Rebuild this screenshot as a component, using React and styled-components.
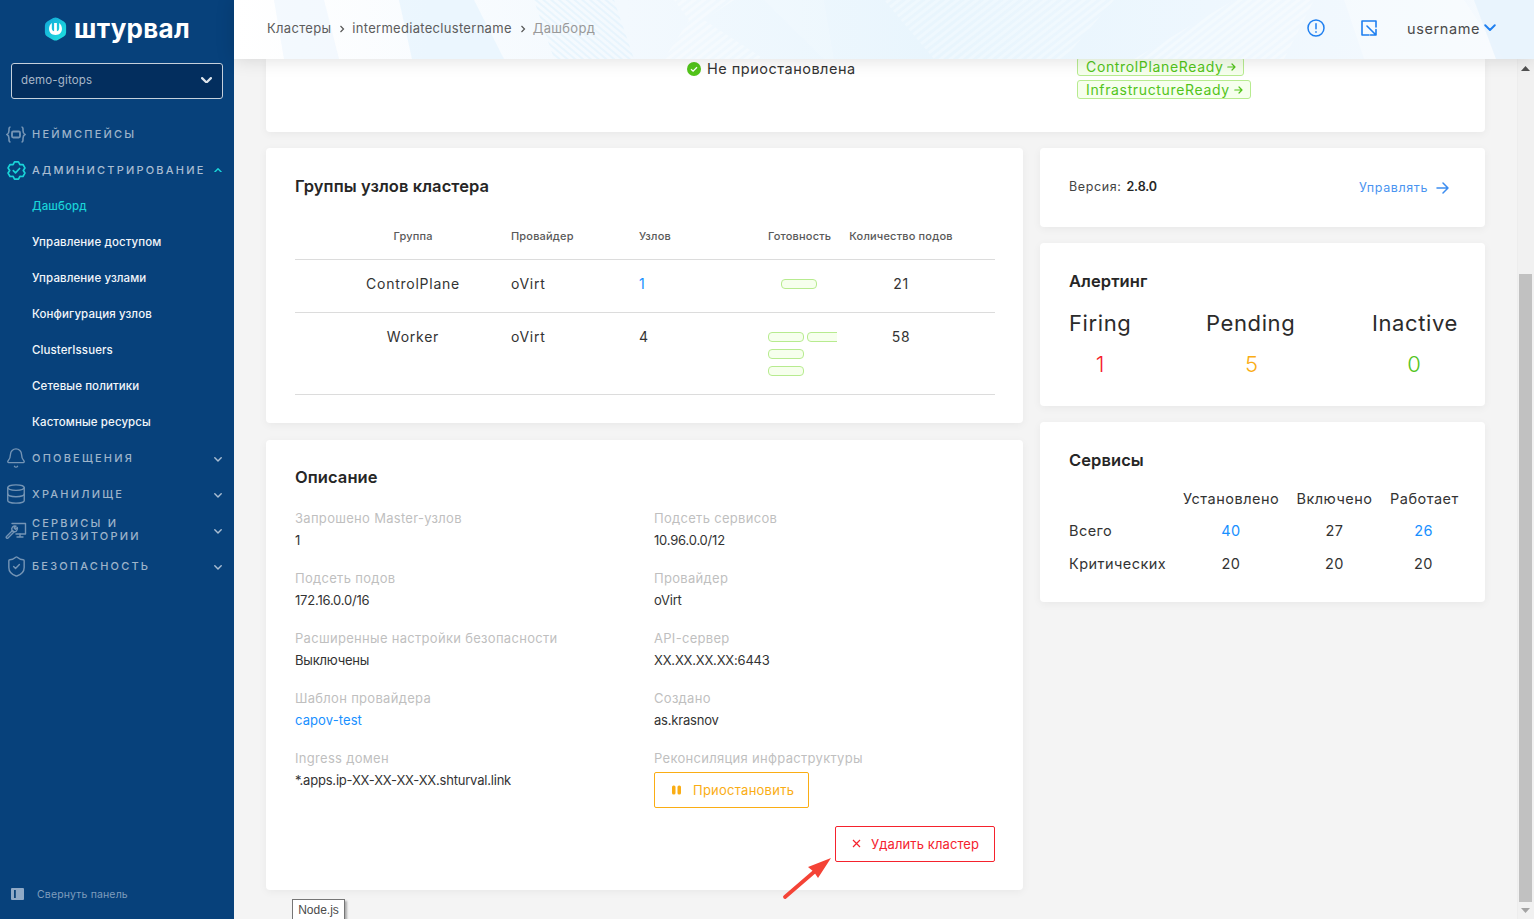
import React from "react";
import styled, { createGlobalStyle } from "styled-components";
import { Bell, Database, ShieldCheck } from "lucide-react";

const FONT = `Inter, "Noto Sans", "Liberation Sans", sans-serif`;

const Global = createGlobalStyle`
  html, body { margin: 0; padding: 0; height: 100%; overflow: hidden; }
  body { font-family: ${FONT}; background: #f4f4f4; color: #262626; }
  * { box-sizing: border-box; }
`;

const Page = styled.div`display: flex; width: 1534px; height: 919px; overflow: hidden; position: relative;`;

/* Sidebar */
const Sidebar = styled.aside`
  width: 234px; flex: none; height: 100%; background: #07417b;
  display: flex; flex-direction: column;
`;
const Logo = styled.div`
  height: 63px; display: flex; align-items: flex-start; padding: 16px 0 0 44px; gap: 7px;
`;
const LogoText = styled.span`
  color: #fff; font-size: 26px; font-weight: 700; line-height: 25px; letter-spacing: 0.3px;
`;
const NamespaceSelect = styled.div`
  margin: 0 11px 17px; height: 36px; border: 1px solid #c5d0dc; border-radius: 3px; background: #032e5e;
  display: flex; align-items: center; justify-content: space-between; padding: 0 10px 2px 9px;
  color: #a8b7c8; font-size: 11.5px; letter-spacing: 0.15px;
`;
const Nav = styled.nav`display: flex; flex-direction: column;`;
const NavGroup = styled.div`
  height: 36px; display: flex; align-items: center; position: relative; padding-left: 32px; padding-right: 12px;
  color: ${p => (p.$active ? "#a9bdd2" : "#9eb4ca")};
`;
const NavGroupLabel = styled.span`
  flex: 1; font-size: 11px; font-weight: 500; letter-spacing: 2.2px; line-height: 13px; text-transform: uppercase;
`;
const NavChevron = styled.span`display: flex; margin-top: ${p => (p.$open ? 0 : 3)}px;`;
const NavIconSlot = styled.span`
  position: absolute; left: 6px; top: 50%; transform: translateY(-50%); width: 20px; height: 20px;
  display: flex; align-items: center; justify-content: center;
  color: ${p => (p.$active ? "#1ad3d8" : "#7494b5")};
  svg { flex: none; }
`;
const NavItem = styled.div`
  height: 36px; display: flex; align-items: center; padding-left: 32px;
  font-size: 11.5px; font-weight: 500; letter-spacing: 0.1px;
  color: ${p => (p.$active ? "#1ad3d8" : "#f2f6fa")};
`;
const CollapseRow = styled.div`
  margin-top: auto; height: 50px; padding: 0 0 0 11px; display: flex; align-items: center; gap: 13px;
  color: #7f9dbd; font-size: 10.5px; letter-spacing: 0.15px;
`;

/* Main */
const Main = styled.div`flex: 1; min-width: 0; display: flex; flex-direction: column;`;
const Header = styled.header`
  height: 59px; flex: none; position: relative; z-index: 2; overflow: hidden;
  background: linear-gradient(90deg, #ffffff 0%, #f3f9fe 30%, #e8f5fd 55%, #eef7fe 75%, #f6fafe 100%);
  box-shadow: 0 0 18px rgba(0,0,0,0.14);
  display: flex; align-items: center; justify-content: space-between; padding: 0 38px 3px 33px;
`;
const HeaderArt = styled.svg`position: absolute; inset: 0; width: 100%; height: 100%;`;
const Breadcrumbs = styled.div`
  position: relative; display: flex; align-items: center; font-size: 13px; letter-spacing: 0.3px; color: #595959;
`;
const Crumb = styled.span`color: ${p => (p.$last ? "#999" : "#5c5c5c")};`;
const CrumbSep = styled.svg`width: 6px; height: 8px; margin: 1px 7px 0 8px; flex: none;`;
const HeaderTools = styled.div`position: relative; display: flex; align-items: center;`;
const UserName = styled.span`font-size: 14.5px; letter-spacing: 0.6px; color: #4a4a4a; margin: 0 4px 0 30px;`;
const ToolIcon = styled.svg`flex: none; margin-right: ${p => p.$mr || 0}px;`;

const Body = styled.div`flex: 1; min-height: 0; display: flex;`;
const Content = styled.main`
  flex: 1; min-width: 0; overflow: hidden; padding: 0 32px; display: flex; flex-direction: column; gap: 16px;
`;
const Card = styled.section`
  background: #fff; border-radius: 4px; box-shadow: 0 2px 8px rgba(0,0,0,0.05);
`;
const TopCard = styled(Card)`
  height: 73px; flex: none; border-radius: 0 0 4px 4px; display: grid; grid-template-columns: 421px 390px 1fr;
  overflow: hidden;
`;
const Status = styled.div`
  grid-column: 2; grid-row: 1; white-space: nowrap;
  display: flex; align-items: center; gap: 6px; height: 19px; font-size: 14.5px; letter-spacing: 0.5px; color: #333;
`;
const StatusIcon = styled.svg`flex: none; width: 14px; height: 14px;`;
const TagStack = styled.div`
  grid-column: 3; grid-row: 1; margin-top: -2px; display: flex; flex-direction: column; align-items: flex-start; gap: 4px;
`;
const Tag = styled.span`
  height: 19px; padding: 0 7px 0 8px; display: inline-flex; align-items: center; gap: 4px;
  background: #f6ffed; border: 1px solid #b7eb8f; border-radius: 3px; color: #52c41a;
  font-size: 14px; letter-spacing: 0.65px; white-space: nowrap;
`;
const Columns = styled.div`display: grid; grid-template-columns: 757px 445px; column-gap: 17px; align-items: start;`;
const Column = styled.div`display: flex; flex-direction: column; gap: ${p => p.$gap}px;`;

const GroupsCard = styled(Card)`height: 275px; padding: 28px 28px 0 29px;`;
const SectionTitle = styled.h2`
  margin: 0; font-size: 16.5px; font-weight: 600; line-height: 20px; color: #262626; letter-spacing: 0.08px;
`;
const TableRow = styled.div`
  display: grid; grid-template-columns: 216px 128px 129px 69px 1fr; align-items: ${p => (p.$head ? "center" : "start")};
  border-bottom: 1px solid #dcdcdc;
  height: ${p => p.$h}px; padding-top: ${p => p.$pt || 0}px;
  font-size: ${p => (p.$head ? "11px" : "14px")};
  font-weight: ${p => (p.$head ? 500 : 400)};
  color: ${p => (p.$head ? "#595959" : "#333")};
  letter-spacing: ${p => (p.$head ? "0.18px" : "0.75px")};
`;
const GroupCell = styled.div`text-align: center; padding-left: 20px;`;
const PodsCell = styled.div`text-align: center; padding-right: 30px; white-space: nowrap;`;
const NodeLink = styled.span`color: ${p => (p.$link ? "#1890ff" : "inherit")};`;
const PillStack = styled.div`display: flex; flex-direction: column; gap: 7px; padding-top: ${p => p.$pt || 0}px;`;
const PillLine = styled.div`display: flex; gap: 3px; overflow: hidden; width: 69px; padding-left: ${p => p.$indent || 0}px;`;
const Pill = styled.span`
  width: 36px; height: 10px; flex: none; border-radius: 4px; background: #f6ffed; border: 1px solid #b7eb8f;
`;

const DescCard = styled(Card)`height: 450px; padding: 27px 28px 0 29px; display: flex; flex-direction: column;`;
const FieldGrid = styled.div`
  display: grid; grid-template-columns: 359px 1fr; grid-auto-rows: 60px; margin-top: 23px;
`;
const Field = styled.div`display: flex; flex-direction: column; gap: 5px;`;
const FieldLabel = styled.span`font-size: 13px; line-height: 17px; color: #bfbfbf; letter-spacing: 0.3px; white-space: nowrap;`;
const FieldValue = styled.span`font-size: 13px; line-height: 17px; color: #333; letter-spacing: -0.2px; white-space: nowrap;`;
const FieldLink = styled(FieldValue)`color: #1890ff; letter-spacing: 0.1px;`;
const OutlineButton = styled.button`
  height: 36px; width: ${p => p.$w}px; background: #fff; border: 1px solid ${p => p.$c}; border-radius: 2px;
  font: inherit; font-size: 13px; letter-spacing: ${p => p.$ls}px; color: ${p => p.$c}; display: flex; align-items: center; padding: 0 0 1px ${p => p.$pl}px;
  gap: ${p => p.$gap}px; position: relative; flex: none;
`;
const DeleteRow = styled.div`display: flex; justify-content: flex-end; margin-top: 16px;`;
const Annotation = styled.svg`position: absolute; left: -56px; top: 29px; width: 54px; height: 48px; overflow: visible;`;

const VersionCard = styled(Card)`
  height: 79px; padding: 0 36px 0 29px; display: flex; align-items: center; justify-content: space-between;
`;
const VersionText = styled.div`font-size: 12.5px; letter-spacing: 0.6px; color: #444; display: flex; gap: 5px; margin-top: -2px;`;
const VersionValue = styled.b`font-weight: 600; color: #262626; letter-spacing: -0.1px;`;
const ManageLink = styled.div`display: flex; align-items: center; gap: 8px; color: #4a94f0; font-size: 12.5px; letter-spacing: 0.6px;`;
const AlertCard = styled(Card)`height: 163px; padding: 28px 29px 0 29px;`;
const AlertStats = styled.div`display: grid; grid-template-columns: 137px 166px 1fr; margin-top: 18px;`;
const AlertStat = styled.div`display: flex; flex-direction: column; align-items: flex-start;`;
const StatName = styled.div`font-size: 22px; line-height: 28px; letter-spacing: 0.6px; color: #2b2b2b; white-space: nowrap;`;
const StatValue = styled.div`
  font-size: 22px; line-height: 28px; margin-top: 13px; color: ${p => p.$c}; font-weight: 300; text-align: center; width: ${p => p.$w}px;
`;
const ServicesCard = styled(Card)`height: 180px; padding: 28px 29px 0 29px;`;
const ServiceGrid = styled.div`
  display: grid; grid-template-columns: 97px 96px 77px 67px; column-gap: 17px; margin-top: 20px;
  grid-template-rows: 32px 33px 33px; font-size: 14.5px; letter-spacing: 0.45px; color: #333; line-height: 18px;
`;
const ServiceHead = styled.span`text-align: center; white-space: nowrap; letter-spacing: 0.5px;`;
const ServiceName = styled.span`white-space: nowrap;`;
const ServiceNum = styled.span`text-align: center; color: ${p => (p.$link ? "#1890ff" : "inherit")};`;

/* Scrollbar */
const ScrollRail = styled.div`
  width: 17px; flex: none; background: #f1f1f1; border-left: 1px solid #ededed; padding: 0 2px 0 1px;
  display: flex; flex-direction: column; align-items: center;
`;
const ScrollArrow = styled.svg`width: 9px; height: 5px; margin-top: ${p => p.$mt}px; flex: none;`;
const ScrollThumb = styled.div`width: 13px; height: 628px; background: #c1c1c1; margin-top: 203px; flex: none;`;

const Tooltip = styled.div`
  position: absolute; left: 292px; top: 899px; height: 21px; width: 53px; background: #fff;
  border: 1px solid #767676; box-shadow: 2px 2px 2px rgba(0,0,0,0.3); font-size: 12px; color: #4a4a4a;
  display: flex; align-items: center; justify-content: center; font-family: "Liberation Sans", sans-serif;
`;

const Chevron = ({ up, size = 10, color = "currentColor", sw = 1.8 }) => (
  <svg width={size} height={size * 0.6} viewBox="0 0 10 6" fill="none" style={{ flex: "none" }}>
    <path d={up ? "M1 5l4-4 4 4" : "M1 1l4 4 4-4"} stroke={color} strokeWidth={sw} strokeLinecap="round" strokeLinejoin="round" />
  </svg>
);

const BracesIcon = () => (
  <svg width="20" height="17" viewBox="0 0 20 17" fill="none" stroke="currentColor" strokeWidth="1.600">
    <path d="M4.500 1C2.800 1 3 3 3 4.500S2.800 7.500 1 8.500c1.800 1 2 2.500 2 4s-.2 3.500 1.500 3.500" />
    <path d="M15.500 1c1.700 0 1.500 2 1.500 3.500s.2 3 2 4c-1.800 1-2 2.500-2 4s.2 3.500-1.500 3.500" />
    <rect x="6" y="5.500" width="8" height="6" rx="1.200" strokeWidth="1.900" />
  </svg>
);

const gearPath = (() => {
  const c = 9.500;
  const pt = (deg, r) => {
    const a = (deg * Math.PI) / 180;
    return `${(c + r * Math.cos(a)).toFixed(2)} ${(c + r * Math.sin(a)).toFixed(2)}`;
  };
  const parts = [];
  for (let i = 0; i < 6; i++) {
    const a = 60 * i - 90;
    parts.push(pt(a - 13, 8.800), pt(a + 13, 8.800), pt(a + 30, 6.800));
  }
  return `M${parts.join("L")}Z`;
})();

const GearCheckIcon = () => (
  <svg width="19" height="19" viewBox="0 0 19 19" fill="none" stroke="currentColor" strokeWidth="1.700" strokeLinejoin="round" strokeLinecap="round">
    <path d={gearPath} />
    <path d="M6.300 9.700l2.200 2.100 4.100-4.300" />
  </svg>
);
const ToolsIcon = () => (
  <svg width="22" height="18" viewBox="0 0 22 18" fill="none" stroke="currentColor" strokeWidth="1.400" strokeLinecap="round" strokeLinejoin="round">
    <path d="M7 2.500h13.500v10.500H11" />
    <path d="M12 16h6M15 13v3" />
    <path d="M1.500 15.500l6-6 1.500 1.500-6 6a1 1 0 0 1-1.500 0a1 1 0 0 1 0-1.500z" />
    <path d="M7 9.500a3.200 3.200 0 0 1 4-4.300L9.200 7l1.300 1.300 1.800-1.800a3.200 3.200 0 0 1-4.300 4" />
  </svg>
);

const subItems = ["Дашборд", "Управление доступом", "Управление узлами", "Конфигурация узлов", "ClusterIssuers", "Сетевые политики", "Кастомные ресурсы"];

const fields = [
  ["Запрошено Master-узлов", "1"],
  ["Подсеть сервисов", "10.96.0.0/12"],
  ["Подсеть подов", "172.16.0.0/16"],
  ["Провайдер", "oVirt"],
  ["Расширенные настройки безопасности", "Выключены"],
  ["API-сервер", "XX.XX.XX.XX:6443"],
  ["Шаблон провайдера", "capov-test", true],
  ["Создано", "as.krasnov"],
  ["Ingress домен", "*.apps.ip-XX-XX-XX-XX.shturval.link"],
];

const RightArrow = ({ color = "#52c41a" }) => (
  <svg width="9" height="8" viewBox="0 0 9 8" fill="none" stroke={color} strokeWidth="1.200" strokeLinecap="round" strokeLinejoin="round" style={{ flex: "none" }}>
    <path d="M.8 4h7M5 1l3 3-3 3" />
  </svg>
);

function HeaderPattern() {
  return (
    <HeaderArt viewBox="0 0 1300 59" preserveAspectRatio="none" aria-hidden="true">
      <defs>
        <pattern id="hatch" width="6" height="6" patternUnits="userSpaceOnUse" patternTransform="rotate(-38)">
          <rect width="6" height="3" fill="#fff" fillOpacity="0.32" />
        </pattern>
        <pattern id="hatchB" width="5" height="5" patternUnits="userSpaceOnUse" patternTransform="rotate(40)">
          <rect width="5" height="2" fill="#dcefFC" fillOpacity="0.5" />
        </pattern>
      </defs>
      <polygon points="50,59 40,0 90,0 105,59" fill="#e9f4fd" fillOpacity="0.5" />
      <polygon points="165,0 240,0 270,59 178,59" fill="#e6f3fd" fillOpacity="0.7" />
      <polygon points="300,0 380,0 400,59 320,59" fill="url(#hatchB)" />
      <polygon points="440,0 500,0 470,20 530,59 430,59 455,20" fill="url(#hatch)" />
      <polygon points="530,0 590,0 600,59 590,59" fill="#fff" fillOpacity="0.12" />
      <polygon points="650,0 880,0 830,59 700,59" fill="url(#hatch)" fillOpacity="0.9" />
      <polygon points="900,59 1000,0 1080,0 1050,59" fill="url(#hatch)" />
      <polygon points="1110,0 1230,0 1270,59 1130,59" fill="#fff" fillOpacity="0.3" />
      <polygon points="1240,0 1300,0 1300,59 1262,59" fill="#e6f3fd" fillOpacity="0.8" />
    </HeaderArt>
  );
}

export default function App() {
  return (
    <Page>
      <Global />
      <Sidebar>
        <Logo>
          <svg width="23" height="24" viewBox="0 0 24 26" style={{ flex: "none", marginTop: 1 }}>
            <defs>
              <linearGradient id="logoG" x1="0" y1="0" x2="1" y2="1">
                <stop offset="0" stopColor="#12a5d8" />
                <stop offset="1" stopColor="#1fe4e0" />
              </linearGradient>
            </defs>
            <path d="M9.500 1.200a5 5 0 0 1 5 0l6.500 3.700a5 5 0 0 1 2.500 4.300v7.600a5 5 0 0 1-2.500 4.300l-6.500 3.700a5 5 0 0 1-5 0L3 21.100a5 5 0 0 1-2.500-4.300V9.200A5 5 0 0 1 3 4.900z" fill="url(#logoG)" />
            <path d="M8 6.500c-2 1.600-3 3.800-3 6.300 0 3.800 2.500 6.700 7 6.700s7-2.900 7-6.700c0-2.500-1-4.700-3-6.300v5.800c0 2-1.500 3.200-2.500 3.200v-9h-3v9c-1 0-2.500-1.200-2.500-3.200z" fill="#fff" />
          </svg>
          <LogoText>штурвал</LogoText>
        </Logo>
        <NamespaceSelect>
          <span>demo-gitops</span>
          <Chevron color="#dfe5ec" size={11} sw={2} />
        </NamespaceSelect>
        <Nav>
          <NavGroup>
            <NavIconSlot><BracesIcon /></NavIconSlot>
            <NavGroupLabel>Неймспейсы</NavGroupLabel>
          </NavGroup>
          <NavGroup $active>
            <NavIconSlot $active><GearCheckIcon /></NavIconSlot>
            <NavGroupLabel>Администрирование</NavGroupLabel>
            <NavChevron $open><Chevron up size={8} color="#1ad3d8" /></NavChevron>
          </NavGroup>
          {subItems.map((s, i) => (
            <NavItem key={s} $active={i === 0}>{s}</NavItem>
          ))}
          <NavGroup>
            <NavIconSlot><Bell size={22} strokeWidth={1.5} /></NavIconSlot>
            <NavGroupLabel>Оповещения</NavGroupLabel>
            <NavChevron><Chevron size={8} color="#a9bdd2" /></NavChevron>
          </NavGroup>
          <NavGroup>
            <NavIconSlot><Database size={22} strokeWidth={1.5} /></NavIconSlot>
            <NavGroupLabel>Хранилище</NavGroupLabel>
            <NavChevron><Chevron size={8} color="#a9bdd2" /></NavChevron>
          </NavGroup>
          <NavGroup>
            <NavIconSlot><ToolsIcon /></NavIconSlot>
            <NavGroupLabel>Сервисы и<br />репозитории</NavGroupLabel>
            <NavChevron><Chevron size={8} color="#a9bdd2" /></NavChevron>
          </NavGroup>
          <NavGroup>
            <NavIconSlot><ShieldCheck size={23} strokeWidth={1.5} /></NavIconSlot>
            <NavGroupLabel>Безопасность</NavGroupLabel>
            <NavChevron><Chevron size={8} color="#a9bdd2" /></NavChevron>
          </NavGroup>
        </Nav>
        <CollapseRow>
          <svg width="13" height="12" viewBox="0 0 13 12" style={{ flex: "none" }}>
            <rect width="13" height="12" rx="1" fill="#8fa9c6" />
            <rect x="3" y="2" width="1.800" height="8" fill="#0b4379" />
          </svg>
          <span>Свернуть панель</span>
        </CollapseRow>
      </Sidebar>

      <Main>
        <Header>
          <HeaderPattern />
          <Breadcrumbs>
            <Crumb>Кластеры</Crumb>
            <CrumbSep viewBox="0 0 6 8" fill="none"><path d="M1.500 1l3 3-3 3" stroke="#555" strokeWidth="1.200" /></CrumbSep>
            <Crumb>intermediateclustername</Crumb>
            <CrumbSep viewBox="0 0 6 8" fill="none"><path d="M1.500 1l3 3-3 3" stroke="#555" strokeWidth="1.200" /></CrumbSep>
            <Crumb $last>Дашборд</Crumb>
          </Breadcrumbs>
          <HeaderTools>
            <ToolIcon $mr={36} width="18" height="18" viewBox="0 0 18 18" fill="none" stroke="#1e7ff0" strokeWidth="1.500" strokeLinecap="round">
              <circle cx="9" cy="9" r="8" />
              <path d="M9 4.800v5" /><path d="M9 12.800v.4" />
            </ToolIcon>
            <ToolIcon width="16" height="16" viewBox="0 0 16 16" fill="none" stroke="#1e7ff0" strokeWidth="1.600" strokeLinecap="round" strokeLinejoin="round">
              <path d="M15 7V1H1v14h7" />
              <path d="M6 6l9 9M15 9.500V15H9.500" />
            </ToolIcon>
            <UserName>username</UserName>
            <Chevron size={12} color="#1e7ff0" sw={1.600} />
          </HeaderTools>
        </Header>
        <Body>
          <Content>
            <TopCard>
              <Status>
                <StatusIcon viewBox="0 0 14 14">
                  <circle cx="7" cy="7" r="7" fill="#52c41a" />
                  <path d="M4 7.200l2.100 2L10 5.200" fill="none" stroke="#fff" strokeWidth="1.300" />
                </StatusIcon>
                Не приостановлена
              </Status>
              <TagStack>
                <Tag>ControlPlaneReady <RightArrow /></Tag>
                <Tag>InfrastructureReady <RightArrow /></Tag>
              </TagStack>
            </TopCard>
            <Columns>
              <Column $gap={17}>
                <GroupsCard>
                  <SectionTitle>Группы узлов кластера</SectionTitle>
                  <TableRow $head $h={64} $pt={16}>
                    <GroupCell>Группа</GroupCell>
                    <div>Провайдер</div>
                    <div>Узлов</div>
                    <div>Готовность</div>
                    <PodsCell>Количество подов</PodsCell>
                  </TableRow>
                  <TableRow $h={53} $pt={15}>
                    <GroupCell>ControlPlane</GroupCell>
                    <div>oVirt</div>
                    <NodeLink $link>1</NodeLink>
                    <PillStack $pt={4}><PillLine $indent={13}><Pill /></PillLine></PillStack>
                    <PodsCell>21</PodsCell>
                  </TableRow>
                  <TableRow $h={82} $pt={15}>
                    <GroupCell>Worker</GroupCell>
                    <div>oVirt</div>
                    <NodeLink>4</NodeLink>
                    <PillStack $pt={4}>
                      <PillLine><Pill /><Pill /></PillLine>
                      <PillLine><Pill /></PillLine>
                      <PillLine><Pill /></PillLine>
                    </PillStack>
                    <PodsCell>58</PodsCell>
                  </TableRow>
                </GroupsCard>
                <DescCard>
                  <SectionTitle>Описание</SectionTitle>
                  <FieldGrid>
                    {fields.map(([l, v, link]) => (
                      <Field key={l}>
                        <FieldLabel>{l}</FieldLabel>
                        {link ? <FieldLink>{v}</FieldLink> : <FieldValue>{v}</FieldValue>}
                      </Field>
                    ))}
                    <Field>
                      <FieldLabel>Реконсиляция инфраструктуры</FieldLabel>
                      <OutlineButton $w={155} $c="#faad14" $pl={17} $gap={11} $ls={0.25}>
                        <svg width="10" height="10" viewBox="0 0 10 10" fill="#faad14" style={{ flex: "none" }}>
                          <rect x="0" y="0.500" width="3.500" height="9" rx="1.500" />
                          <rect x="5.500" y="0.500" width="3.500" height="9" rx="1.500" />
                        </svg>
                        Приостановить
                      </OutlineButton>
                    </Field>
                  </FieldGrid>
                  <DeleteRow>
                    <OutlineButton $w={160} $c="#f5222d" $pl={16} $gap={10} $ls={0.1}>
                      <svg width="9" height="9" viewBox="0 0 9 9" fill="none" stroke="#f5222d" strokeWidth="1.200" style={{ flex: "none" }}>
                        <path d="M1 1l7 7M8 1L1 8" />
                      </svg>
                      Удалить кластер
                      <Annotation viewBox="0 0 54 48">
                        <path d="M5 41L34 16" stroke="#f44336" strokeWidth="3.800" strokeLinecap="round" />
                        <path d="M51 2L28 11 34 16 38 22z" fill="#f44336" />
                      </Annotation>
                    </OutlineButton>
                  </DeleteRow>
                </DescCard>
              </Column>
              <Column $gap={16}>
                <VersionCard>
                  <VersionText>Версия: <VersionValue>2.8.0</VersionValue></VersionText>
                  <ManageLink>
                    Управлять
                    <svg width="13" height="12" viewBox="0 0 13 12" fill="none" stroke="#3d8df0" strokeWidth="1.500" strokeLinecap="round" strokeLinejoin="round">
                      <path d="M1 6h11M7 1l5 5-5 5" />
                    </svg>
                  </ManageLink>
                </VersionCard>
                <AlertCard>
                  <SectionTitle>Алертинг</SectionTitle>
                  <AlertStats>
                    <AlertStat>
                      <StatName>Firing</StatName>
                      <StatValue $c="#f5222d" $w={62}>1</StatValue>
                    </AlertStat>
                    <AlertStat>
                      <StatName>Pending</StatName>
                      <StatValue $c="#faad14" $w={91}>5</StatValue>
                    </AlertStat>
                    <AlertStat>
                      <StatName>Inactive</StatName>
                      <StatValue $c="#52c41a" $w={84}>0</StatValue>
                    </AlertStat>
                  </AlertStats>
                </AlertCard>
                <ServicesCard>
                  <SectionTitle>Сервисы</SectionTitle>
                  <ServiceGrid>
                    <span />
                    <ServiceHead>Установлено</ServiceHead>
                    <ServiceHead>Включено</ServiceHead>
                    <ServiceHead>Работает</ServiceHead>
                    <ServiceName>Всего</ServiceName>
                    <ServiceNum $link>40</ServiceNum>
                    <ServiceNum>27</ServiceNum>
                    <ServiceNum $link>26</ServiceNum>
                    <ServiceName>Критических</ServiceName>
                    <ServiceNum>20</ServiceNum>
                    <ServiceNum>20</ServiceNum>
                    <ServiceNum>20</ServiceNum>
                  </ServiceGrid>
                </ServicesCard>
              </Column>
            </Columns>
          </Content>
          <ScrollRail>
            <ScrollArrow $mt={7} viewBox="0 0 9 5"><path d="M4.500 0L9 5H0z" fill="#505050" /></ScrollArrow>
            <ScrollThumb />
            <ScrollArrow $mt={6} viewBox="0 0 9 5"><path d="M0 0h9L4.500 5z" fill="#a3a3a3" /></ScrollArrow>
          </ScrollRail>
        </Body>
      </Main>
      <Tooltip>Node.js</Tooltip>
    </Page>
  );
}
